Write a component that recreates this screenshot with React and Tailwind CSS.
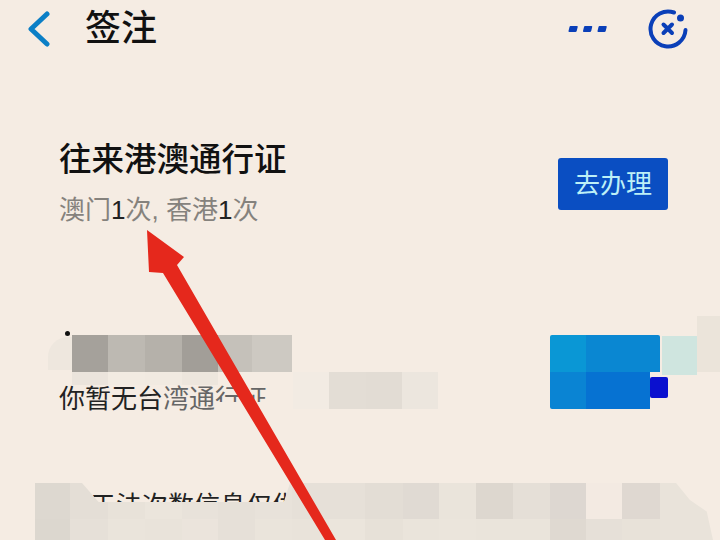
const FONT = "font-['Liberation_Sans','Noto_Sans_CJK_SC',sans-serif]";

function Row({ className = "", cells }) {
  return (
    <div className={"flex " + className}>
      {cells.map((c, i) => (
        <div key={i} className={"h-full shrink-0 " + c} />
      ))}
    </div>
  );
}

export default function App() {
  return (
    <div className={"relative w-[720px] h-[540px] overflow-hidden bg-[#f5ece3] text-[#111] " + FONT}>
      <header className="h-[58px] flex items-center pl-[27px] pr-[32px]">
        <svg width="24" height="36" viewBox="0 0 24 36" fill="none" stroke="#0b7fc6" strokeWidth="5" strokeLinecap="round" strokeLinejoin="round">
          <path d="M20 3 L4 18 L20 33" />
        </svg>
        <h1 className="ml-[34px] text-[36px] leading-[44px] font-medium">签注</h1>
        <div className="ml-auto flex items-center gap-[41px]">
          <svg width="39" height="8" viewBox="0 0 39 8" fill="#0a3fb8">
            <path d="M2.500 1h6.500q1 0 .7 1l-1 4q-.3 1-1.300 1H1.500q-1.300 0-1-1l1-4q.2-1 1-1z M17 1h6.500q1 0 .7 1l-1 4q-.3 1-1.300 1H16q-1.300 0-1-1l1-4q.2-1 1-1z M31.500 1H38q1 0 .7 1l-1 4q-.3 1-1.300 1h-5.900q-1.300 0-1-1l1-4q.2-1 1-1z" />
          </svg>
          <svg width="40" height="40" viewBox="0 0 40 40" fill="none" stroke="#0a3fb8" strokeWidth="4" strokeLinecap="round">
            <path d="M26 3.500 A17.500 17.500 0 1 0 37.500 21" />
            <circle cx="32.500" cy="9" r="3.500" fill="#0a3fb8" stroke="none" />
            <path d="M15.500 15.500 L24 24 M24 15.500 L15.500 24" />
          </svg>
        </div>
      </header>

      <section className="mt-[82px] pl-[59px] pr-[52px] flex items-center justify-between">
        <div>
          <div className="text-[32.5px] leading-[40px] font-medium">往来港澳通行证</div>
          <div className="mt-[14px] text-[26px] leading-[32px] text-[#85827d]">
            澳门<span className="text-[#222] font-medium">1</span>次, 香港<span className="text-[#222] font-medium">1</span>次
          </div>
        </div>
        <button className="mt-[2px] w-[110px] h-[52px] rounded-[3px] bg-[#0a4ec2] text-[#bdf0f7] text-[26px] leading-[32px]">去办理</button>
      </section>

      {/* Second row: redacted text and blue mosaic */}
      <section className="relative mt-[109px] pl-[59px] flex items-start">
        <div className="w-[379px]">
          <Row
            className="ml-[13px] h-[37px]"
            cells={[
              "w-[36px] bg-[#a5a19b]",
              "w-[37px] bg-[#bdb9b2]",
              "w-[37px] bg-[#b5b1aa]",
              "w-[36px] bg-[#a29e98]",
              "w-[34px] bg-[#c5c1ba]",
              "w-[40px] bg-[#cdc9c2]",
            ]}
          />
          <div className="flex h-[37px] items-start">
            <div className="relative w-[234px] h-[37px]">
              <div className="pt-[9px] text-[26px] leading-[36px] whitespace-nowrap text-[#222]">
                你暂无台<span className="text-[#666]">湾通行证</span>
              </div>
              <Row
                className="absolute left-[13px] top-0 h-[13px]"
                cells={["w-[36px] bg-[#ebe4dc]", "w-[37px] bg-[#f2ebe2]", "w-[37px] bg-[#f1eae1]", "w-[36px] bg-[#ede6dd]"]}
              />
              <div className="absolute left-[159px] top-[30px] w-[75px] h-[15px] bg-[#f5ece3]" />
            </div>
            <Row
              className="h-[37px]"
              cells={["w-[36px] bg-[#f2ebe3]", "w-[37px] bg-[#e3ddd5]", "w-[36px] bg-[#e2dcd4]", "w-[36px] bg-[#ece6de]"]}
            />
          </div>
        </div>

        <div className="relative ml-[112px] w-[110px]">
          <Row className="h-[37px] rounded-t-[2px] overflow-hidden" cells={["w-[36px] bg-[#0a97d5]", "w-[74px] bg-[#0a87d2]"]} />
          <Row className="h-[37px] rounded-b-[2px] overflow-hidden" cells={["w-[36px] bg-[#0a84d3]", "w-[64px] bg-[#0672d2]"]} />
          <div className="absolute left-[100px] top-[42px] w-[18px] h-[21px] rounded-[2px] bg-[#0a10cf]" />
        </div>
        <div className="ml-[2px] mt-[1px] w-[35px] h-[39px] bg-[#cfe5df]" />
        <div className="-mt-[19px] w-[23px] h-[56px] bg-[#ebe4da]" />

        <div className="absolute left-[48px] top-[2px] w-[24px] h-[33px] rounded-tl-[20px] bg-[#eee7de]" />
        <div className="absolute left-[65px] -top-[4px] w-[5px] h-[5px] rounded-full bg-[#111]" />
      </section>

      {/* Bottom mosaic */}
      <section className="relative mt-[74px] pl-[35px]">
        <Row
          className="h-[36px]"
          cells={[
            "w-[35px] bg-[#ddd8d0]",
            "w-[38px] bg-[#e4ded6]",
            "w-[37px] bg-[#e8e2d9]",
            "w-[37px] bg-[#ebe5dc]",
            "w-[36px] bg-[#e8e2da]",
            "w-[37px] bg-[#e6e0d8]",
            "w-[37px] bg-[#e8e2da]",
            "w-[37px] bg-[#e6e0d8]",
            "w-[36px] bg-[#e6e0d8]",
            "w-[38px] bg-[#e3ddd5]",
            "w-[36px] bg-[#e0dad3]",
            "w-[37px] bg-[#eae4db]",
            "w-[37px] bg-[#ddd7cf]",
            "w-[37px] bg-[#e5dfd7]",
            "w-[36px] bg-[#ddd7d1]",
            "w-[36px] bg-[#f3eae2]",
            "w-[38px] bg-[#dfd8d1]",
            "w-[12px] bg-[#e9e3da]",
          ]}
        />
        <Row
          className="h-[21px]"
          cells={[
            "w-[35px] bg-[#dcd7cf]",
            "w-[38px] bg-[#e6e0d8]",
            "w-[37px] bg-[#eae4db]",
            "w-[37px] bg-[#e9e3da]",
            "w-[36px] bg-[#ebe4dc]",
            "w-[37px] bg-[#e6e0d8]",
            "w-[37px] bg-[#eae4db]",
            "w-[37px] bg-[#e9e3da]",
            "w-[36px] bg-[#ebe5dc]",
            "w-[38px] bg-[#e7e1d8]",
            "w-[36px] bg-[#eae4db]",
            "w-[37px] bg-[#ebe5dc]",
            "w-[37px] bg-[#eae4db]",
            "w-[37px] bg-[#eae4db]",
            "w-[36px] bg-[#dfd9d1]",
            "w-[36px] bg-[#e6e0d8]",
            "w-[38px] bg-[#e8e2d9]",
            "w-[12px] bg-[#e9e3da]",
          ]}
        />
        <div className="absolute left-[671px] top-0 w-[42px] h-[57px] bg-[#e9e3da] [clip-path:polygon(0_0,12%_0,45%_30%,85%_50%,100%_100%,0_100%)]" />
        <div className="absolute left-[82px] top-0 w-[208px] h-[19px] overflow-hidden bg-[#f5ece3] [clip-path:polygon(0_0,100%_0,97%_100%,8%_100%)]">
          <div className="pl-[8px] pt-[5px] text-[26px] leading-[36px] whitespace-nowrap text-[#222]">于法次数信息仅供</div>
        </div>
      </section>

      {/* Annotation arrow */}
      <svg className="absolute left-0 top-0 pointer-events-none" width="720" height="540" viewBox="0 0 720 540">
        <path d="M147 230 L184 257 L177 265 L336 540 L325 540 L163 273 L149 272 Z" fill="#e5281c" />
      </svg>
    </div>
  );
}
